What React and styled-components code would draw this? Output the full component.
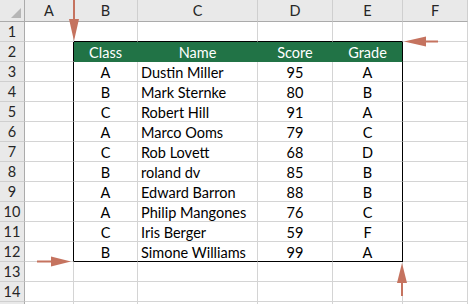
import React from "react";
import styled, { createGlobalStyle, css } from "styled-components";

const COLS = ["A", "B", "C", "D", "E", "F"];
const WIDTHS = [25, 49, 64, 120, 75, 70, 65];
const ROW_COUNT = 15;
const LABELLED_ROWS = 14;

const header = ["Class", "Name", "Score", "Grade"];
const people = [
  ["A", "Dustin Miller", "95", "A"],
  ["B", "Mark Sternke", "80", "B"],
  ["C", "Robert Hill", "91", "A"],
  ["A", "Marco Ooms", "79", "C"],
  ["C", "Rob Lovett", "68", "D"],
  ["B", "roland dv", "85", "B"],
  ["A", "Edward Barron", "88", "B"],
  ["A", "Philip Mangones", "76", "C"],
  ["C", "Iris Berger", "59", "F"],
  ["B", "Simone Williams", "99", "A"],
];

const GRID = "#d4d4d4";
const GREEN = "#217346";
const ARROW = "#c5735f";

const GlobalStyle = createGlobalStyle`
  body {
    margin: 0;
    background: #fff;
    overflow: hidden;
  }
  * {
    box-sizing: border-box;
  }
`;

const Sheet = styled.div`
  position: relative;
  display: grid;
  grid-template-columns: ${WIDTHS.map((w) => w + "px").join(" ")};
  grid-template-rows: 22px;
  grid-auto-rows: 20px;
  width: 468px;
  height: 304px;
  overflow: hidden;
  font-family: Lato, "Open Sans", sans-serif;
  font-size: 14.5px;
  color: #000;
`;

const HeadCell = styled.div`
  display: flex;
  align-items: center;
  justify-content: center;
  background: #e9e9e9;
  border-right: 1px solid #cfcfcf;
  border-bottom: 1px solid ${(p) => (p.$bottom ? "#ababab" : "#cfcfcf")};
  color: #262626;
  font-size: 14.5px;
  ${(p) =>
    p.$rowHead &&
    css`
      border-right-color: #ababab;
    `}
`;

const Corner = styled(HeadCell)`
  position: relative;
  &::after {
    content: "";
    position: absolute;
    right: 3px;
    bottom: 3px;
    width: 10px;
    height: 10px;
    background: #b6b6b6;
    clip-path: polygon(100% 0, 100% 100%, 0 100%);
  }
`;

const Cell = styled.div`
  display: flex;
  align-items: center;
  justify-content: ${(p) => (p.$left ? "flex-start" : "center")};
  padding-left: ${(p) => (p.$left ? "3px" : "0")};
  padding-top: 1px;
  white-space: nowrap;
  background: ${(p) => p.$bg || "#fff"};
  color: ${(p) => (p.$bg ? "#fff" : "#000")};
  border-right: 1px solid ${(p) => p.$right || GRID};
  border-bottom: 1px solid ${(p) => p.$bottom || GRID};
`;

const Arrows = styled.svg`
  position: absolute;
  inset: 0;
  pointer-events: none;
`;

function cellProps(r, c) {
  // r: sheet row (1-based), c: column index (0 = A)
  const inTable = r >= 2 && r <= 12 && c >= 1 && c <= 4;
  const props = {};
  if (r === 2 && inTable) {
    props.$bg = GREEN;
    props.$right = GREEN;
    props.$bottom = GREEN;
  }
  if (inTable && c === 4) props.$right = "#000";
  if (r >= 2 && r <= 12 && c === 0) props.$right = "#000";
  if (r === 1 && c >= 1 && c <= 4) props.$bottom = "#000";
  if (r === 12 && inTable) props.$bottom = "#000";
  if (r >= 3 && r <= 12 && c === 2) props.$left = true;
  return props;
}

function cellText(r, c) {
  if (c < 1 || c > 4) return "";
  if (r === 2) return header[c - 1];
  if (r >= 3 && r <= 12) return people[r - 3][c - 1];
  return "";
}

export default function App() {
  const rows = Array.from({ length: ROW_COUNT }, (_, i) => i + 1);
  return (
    <>
      <GlobalStyle />
      <Sheet>
        <Corner $bottom $rowHead />
        {COLS.map((col) => (
          <HeadCell key={col} $bottom>
            {col}
          </HeadCell>
        ))}
        {rows.map((r) => (
          <React.Fragment key={r}>
            <HeadCell $rowHead>{r <= LABELLED_ROWS ? r : ""}</HeadCell>
            {COLS.map((col, c) => (
              <Cell key={col} {...cellProps(r, c)}>
                {cellText(r, c)}
              </Cell>
            ))}
          </React.Fragment>
        ))}
        <Arrows width="468" height="304" viewBox="0 0 468 304">
          <g fill={ARROW}>
            <rect x="73" y="0" width="2" height="20" />
            <polygon points="69,19 79,19 74,41" />
            <rect x="420" y="40.5" width="18" height="2" />
            <polygon points="404,41.5 426,36.5 426,46.5" />
            <rect x="37" y="260.5" width="16" height="2" />
            <polygon points="51,256.5 51,266.5 71,261.5" />
            <rect x="401" y="280" width="2" height="16" />
            <polygon points="402,263 397,283 407,283" />
          </g>
        </Arrows>
      </Sheet>
    </>
  );
}
